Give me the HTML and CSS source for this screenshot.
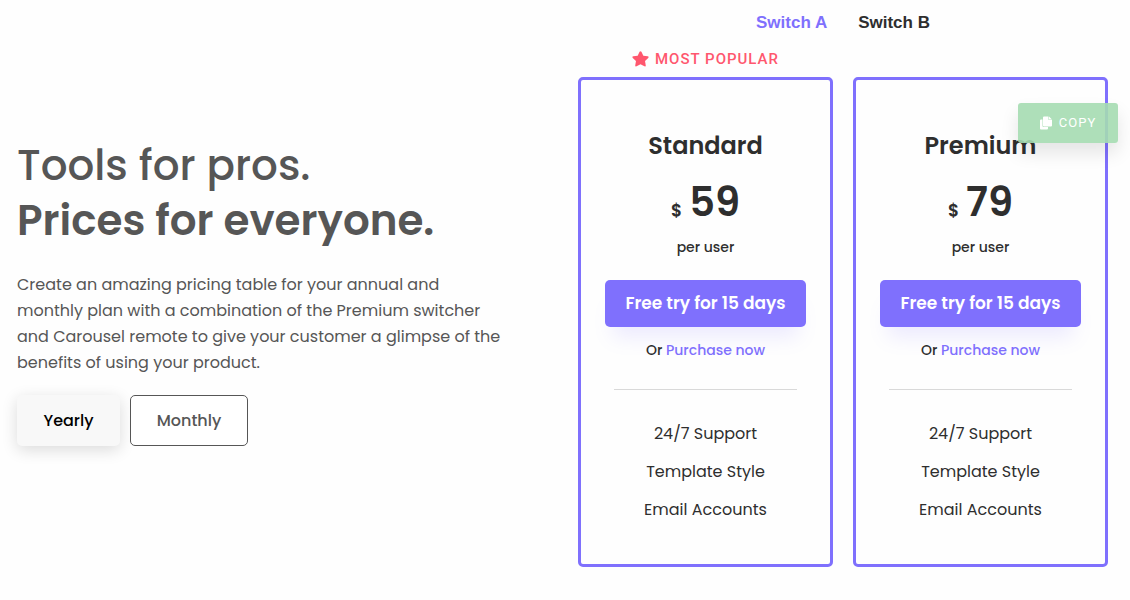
FILE: index.html
```html
<!DOCTYPE html>
<html lang="en">
<head>
<meta charset="utf-8">
<meta name="viewport" content="width=device-width, initial-scale=1">
<title>Pricing</title>
<link rel="stylesheet" href="styles.css">
</head>
<body>
<main class="page">
  <section class="intro">
    <h1 class="title">Tools for pros.<br><strong>Prices for everyone.</strong></h1>
    <p class="lead">Create an amazing pricing table for your annual and<br>monthly plan with a combination of the Premium switcher<br>and Carousel remote to give your customer a glimpse of the<br>benefits of using your product.</p>
    <div class="periods">
      <button type="button" class="period period-active">Yearly</button>
      <button type="button" class="period">Monthly</button>
    </div>
  </section>
  <section class="pricing">
    <div class="switcher">
      <button type="button" class="switch switch-active">Switch A</button>
      <button type="button" class="switch">Switch B</button>
    </div>
    <div class="plans">
      <p class="popular">
        <svg class="star" viewBox="0 0 18 17" aria-hidden="true"><path d="M8 .8Q9 -.5 10 .8L12 5l4.700.7q1.500.4.500 1.700L13.800 10.700l.8 4.700q0 1.500-1.400.9L9 14.100l-4.200 2.200q-1.400.6-1.400-.9l.8-4.700L.8 7.400Q-.2 6.100 1.300 5.700L6 5Z"/></svg>
        <span>MOST POPULAR</span>
      </p>
      <article class="card">
        <h2 class="plan">Standard</h2>
        <p class="price"><span class="currency">$</span><span>59</span></p>
        <p class="unit">per user</p>
        <button type="button" class="cta">Free try for 15 days</button>
        <p class="alt">Or <a class="link" href="#">Purchase now</a></p>
        <ul class="features"><li>24/7 Support</li><li>Template Style</li><li>Email Accounts</li></ul>
      </article>
      <article class="card">
        <h2 class="plan">Premium</h2>
        <p class="price"><span class="currency">$</span><span>79</span></p>
        <p class="unit">per user</p>
        <button type="button" class="cta">Free try for 15 days</button>
        <p class="alt">Or <a class="link" href="#">Purchase now</a></p>
        <ul class="features"><li>24/7 Support</li><li>Template Style</li><li>Email Accounts</li></ul>
        <button type="button" class="copy">
          <svg class="copy-icon" viewBox="0 0 12 14" aria-hidden="true"><path d="M0 4.500Q0 3.500 1 3.500H2.500V10Q2.500 11 3.500 11H8V12.500Q8 13.500 7 13.500H1Q0 13.500 0 12.500Z"/><path d="M3 1.500Q3 .5 4 .5H8.500V4H12V9.500Q12 10.500 11 10.500H4Q3 10.500 3 9.500Z"/><path d="M9 .5 12 3.500H9Z"/></svg>
          <span>COPY</span>
        </button>
      </article>
    </div>
  </section>
</main>
</body>
</html>
```
FILE: styles.css
```css
* { box-sizing: border-box; }
body {
  margin: 0;
  background: #fefefe;
  color: #2e2e2e;
  font-family: Poppins, Inter, "Open Sans", sans-serif;
  font-size: 16px;
}
h1, h2, p, ul { margin: 0; padding: 0; }
button { font: inherit; color: inherit; cursor: pointer; }
.page {
  display: grid;
  grid-template-columns: minmax(0, 539fr) minmax(0, 530fr);
  column-gap: 22px;
  padding: 0 22px 32px 17px;
}
.intro { padding-top: 138px; color: #565656; }
.title { font-size: 42px; line-height: 55px; font-weight: 500; }
.title strong { font-weight: 600; }
.lead { margin-top: 24px; line-height: 26px; white-space: nowrap; }
.periods { display: flex; gap: 10px; margin-top: 19px; }
.period {
  height: 51px;
  width: 118px;
  border: 1px solid #565656;
  border-radius: 5px;
  background: #fff;
  font-weight: 500;
}
.period-active {
  width: 103px;
  border-color: transparent;
  background: #f8f8f8;
  color: #000;
  box-shadow: 0 4px 16px rgba(0, 0, 0, .14);
}
.switcher {
  display: flex;
  justify-content: center;
  gap: 31px;
  height: 46px;
  align-items: center;
}
.switch {
  padding: 0;
  border: 0;
  background: none;
  font-family: "Liberation Sans", Arial, sans-serif;
  font-weight: 700;
  font-size: 17px;
}
.switch-active, .link { color: #7f70fd; }
.plans {
  display: grid;
  grid-template-columns: 1fr 1fr;
  grid-template-rows: 31px auto;
  column-gap: 20px;
}
.popular {
  display: flex;
  grid-column: 1;
  justify-content: center;
  align-items: center;
  gap: 6px;
  padding-bottom: 5px;
  color: #ff576e;
  font: 500 15px/20px Roboto, sans-serif;
  letter-spacing: 1px;
}
.star { width: 17px; height: 16px; fill: currentColor; }
.card {
  position: relative;
  grid-row: 2;
  padding: 51px 24px 35px;
  border: 3px solid #7f70fd;
  border-radius: 5px;
  text-align: center;
}
.plan { font-size: 24px; line-height: 30px; font-weight: 600; }
.price {
  display: flex;
  justify-content: center;
  align-items: baseline;
  gap: 7px;
  margin-top: 16px;
  font-size: 40px;
  line-height: 50px;
  font-weight: 600;
}
.currency { font-size: 17px; }
.unit { margin-top: 1px; font-size: 14px; line-height: 22px; font-weight: 500; }
.cta {
  width: 100%;
  height: 47px;
  margin-top: 22px;
  padding: 0 0 2px;
  border: 0;
  border-radius: 5px;
  background: #7f70fd;
  box-shadow: 0 18px 20px -8px rgba(127, 112, 253, .14);
  color: #fff;
  font-weight: 600;
  font-size: 17px;
}
.alt { margin-top: 12px; font-size: 14px; line-height: 22px; font-weight: 500; }
.link { text-decoration: none; }
.features {
  margin: 28px 9px 0;
  padding-top: 25px;
  border-top: 1px solid #d9d9d9;
  list-style: none;
  line-height: 38px;
}
.copy {
  position: absolute;
  top: 23px;
  right: -13px;
  display: flex;
  justify-content: center;
  align-items: center;
  gap: 7px;
  width: 100px;
  height: 40px;
  padding: 0;
  border: 0;
  border-radius: 3px;
  background: rgba(165, 220, 177, .9);
  box-shadow: 0 10px 18px rgba(0, 0, 0, .1);
  color: #fff;
  font: 400 13px/20px Roboto, sans-serif;
  letter-spacing: 1px;
}
.copy-icon { width: 12px; height: 14px; fill: currentColor; }
```
